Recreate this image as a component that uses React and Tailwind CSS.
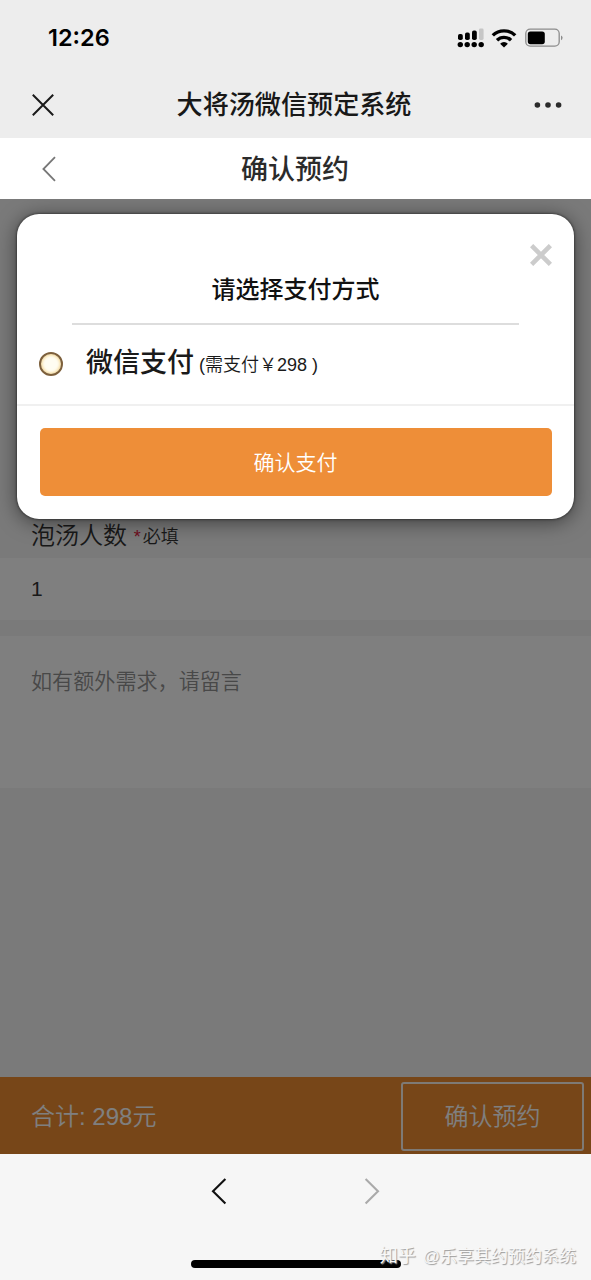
import React from "react";

const SignalIcon = () => (
  <svg width="27" height="20" viewBox="0 0 27 20" fill="#000">
    <rect x="1" y="6" width="4.8" height="6" rx="1.8" />
    <rect x="8" y="4.6" width="4.8" height="7.4" rx="1.8" />
    <rect x="15" y="2.6" width="4.8" height="9.4" rx="1.8" />
    <rect x="22" y="0.6" width="4.6" height="11.4" rx="1.4" fill="#c6c6c6" />
    <circle cx="3.3" cy="16.6" r="2.7" />
    <circle cx="10.2" cy="16.6" r="2.7" />
    <circle cx="17.2" cy="16.6" r="2.7" />
    <circle cx="24.2" cy="16.6" r="2.7" />
  </svg>
);

const WifiIcon = () => (
  <svg width="26" height="19" viewBox="0 0 26 19" fill="none" stroke="#000" strokeWidth="3.4">
    <path d="M1.8 6.4a16 16 0 0 1 22.4 0" />
    <path d="M6 11.2a10 10 0 0 1 14 0" />
    <path d="M13 18.6l-3.9-3.9a5.5 5.5 0 0 1 7.8 0z" fill="#000" stroke="none" />
  </svg>
);

const BatteryIcon = () => (
  <svg width="39" height="20" viewBox="0 0 39 20">
    <rect x="0.8" y="1.2" width="33.4" height="17" rx="4.4" fill="none" stroke="#8c8c8c" strokeWidth="1.3" />
    <rect x="2.8" y="3.4" width="17" height="12.8" rx="2.6" fill="#000" />
    <path d="M36 7.4a2.6 2.6 0 0 1 0 4.8z" fill="#8c8c8c" />
  </svg>
);

const StatusBar = () => (
  <div className="flex h-[76px] items-center justify-between pl-12 pr-[27px]">
    <span className="font-['Inter',sans-serif] text-[23.5px] font-semibold leading-none">12:26</span>
    <div className="flex items-center">
      <SignalIcon />
      <span className="ml-[7px]">
        <WifiIcon />
      </span>
      <span className="ml-2">
        <BatteryIcon />
      </span>
    </div>
  </div>
);

const WebviewBar = () => (
  <div className="flex h-[62px] items-center justify-between pl-8 pr-[29px] pb-[5px]">
    <svg width="22" height="22" viewBox="0 0 22 22" fill="none" stroke="#1a1a1a" strokeWidth="2">
      <path d="M0.8 0.8l20.4 20.4M21.2 0.8L0.8 21.2" />
    </svg>
    <h1 className="pt-[2px] text-[26.1px] font-medium leading-none text-[#181818]">大将汤微信预定系统</h1>
    <svg width="28" height="6" viewBox="0 0 28 6" fill="#2b2b2b">
      <circle cx="3.4" cy="3" r="2.8" />
      <circle cx="14" cy="3" r="2.8" />
      <circle cx="24.6" cy="3" r="2.8" />
    </svg>
  </div>
);

const PageHeader = () => (
  <div className="flex h-[61px] items-center bg-white px-[42px]">
    <svg width="15" height="26" viewBox="0 0 15 26" fill="none" stroke="#777" strokeWidth="1.8">
      <path d="M13 1.2L1.4 13 13 24.8" />
    </svg>
    <h2 className="flex-1 pr-4 pt-[3px] text-center text-[27px] font-medium leading-none text-[#2b2b2b]">
      确认预约
    </h2>
  </div>
);

const BookingForm = () => (
  <div className="flex h-full flex-col bg-[#f4f4f4] pt-[311px]">
    <div className="flex h-[48px] items-center whitespace-pre pl-[31px] pt-[3px] text-[#333]">
      <span className="text-2xl font-[350] leading-none">泡汤人数 </span>
      <span className="pt-[3px] text-lg font-[350] leading-none">
        <span className="mr-[2px] text-[#e02040]">*</span>必填
      </span>
    </div>
    <div className="flex h-[62px] items-center bg-white pl-[31px] text-[21px] text-[#333]">1</div>
    <div className="mt-4 h-[152px] bg-white pl-[31px] pt-[31px] text-[21.1px] font-[350] leading-[30px] text-[#909090]">
      如有额外需求，请留言
    </div>
    <div className="mt-auto flex h-[77px] items-center justify-between bg-[#ee8c30] pl-[31px] pr-[7px] pt-[2px] text-2xl font-[350] text-white">
      <span>合计: 298元</span>
      <button className="h-[69px] w-[183px] rounded-[3px] border-2 border-white/90">确认预约</button>
    </div>
  </div>
);

const PaymentModal = () => (
  <div className="absolute inset-0 bg-black/50 px-[17px] pt-[15px]">
    <div className="relative flex h-[305px] flex-col rounded-[22px] bg-white shadow-[0_3px_20px_rgba(0,0,0,0.5),0_0_3px_rgba(0,0,0,0.7)]">
      <svg
        className="absolute right-[22px] top-[30px]"
        width="22"
        height="22"
        viewBox="0 0 22 22"
        fill="none"
        stroke="#ccc"
        strokeWidth="4.6"
      >
        <path d="M1.6 1.6l18.8 18.8M20.4 1.6L1.6 20.4" />
      </svg>
      <h3 className="mx-[55px] h-[111px] border-b-2 border-[#ddd] pt-[61px] text-center text-2xl font-medium leading-[30px] text-[#111]">
        请选择支付方式
      </h3>
      <label className="flex h-[81px] items-center border-b-2 border-[#f0f0f0] pl-[22px]">
        <span className="mb-[2px] h-6 w-6 rounded-full border-2 border-[#7d603c] bg-[#fffdf2] shadow-[inset_0_0_3px_1px_#f3d590]" />
        <span className="ml-[23px] flex items-baseline whitespace-pre pb-[3px] text-[#1a1a1a]">
          <span className="text-[27px] font-medium leading-none">微信支付</span>
          <span className="relative -top-px ml-[5px] text-lg font-[350] leading-none">(需支付￥298 )</span>
        </span>
      </label>
      <button className="mx-[22.5px] mt-[22px] h-[68px] rounded-[5px] bg-[#ee8e38] pt-[2px] text-[21px] font-[350] text-white">
        确认支付
      </button>
    </div>
  </div>
);

const BrowserBar = () => (
  <div className="relative h-[126px] bg-[#f6f6f6]">
    <div className="flex justify-center gap-[137px] pt-6">
      <svg width="16" height="27" viewBox="0 0 16 27" fill="none" stroke="#111" strokeWidth="2.1">
        <path d="M14.4 1L2 13.2l12.4 12.4" />
      </svg>
      <svg width="16" height="27" viewBox="0 0 16 27" fill="none" stroke="#aaa" strokeWidth="2.1">
        <path d="M1.6 1L14 13.2 1.6 25.6" />
      </svg>
    </div>
    {/* Home indicator */}
    <div className="mx-auto mt-[55px] h-2 w-[210px] rounded-full bg-black" />
    <span className="absolute bottom-[15px] right-[15px] flex items-center gap-[7px] text-[17px] leading-none text-[#f8f8f8] [text-shadow:1px_1px_1px_#999]">
      <span className="text-lg leading-none">知乎</span>
      <span>@乐享其约预约系统</span>
    </span>
  </div>
);

const App = () => (
  <div className="flex h-[1280px] w-[591px] flex-col overflow-hidden bg-[#ededed] font-['Liberation_Sans','Noto_Sans_CJK_SC',sans-serif]">
    <StatusBar />
    <WebviewBar />
    <PageHeader />
    <main className="relative flex-1 overflow-hidden">
      <BookingForm />
      <PaymentModal />
    </main>
    <BrowserBar />
  </div>
);

export default App;
